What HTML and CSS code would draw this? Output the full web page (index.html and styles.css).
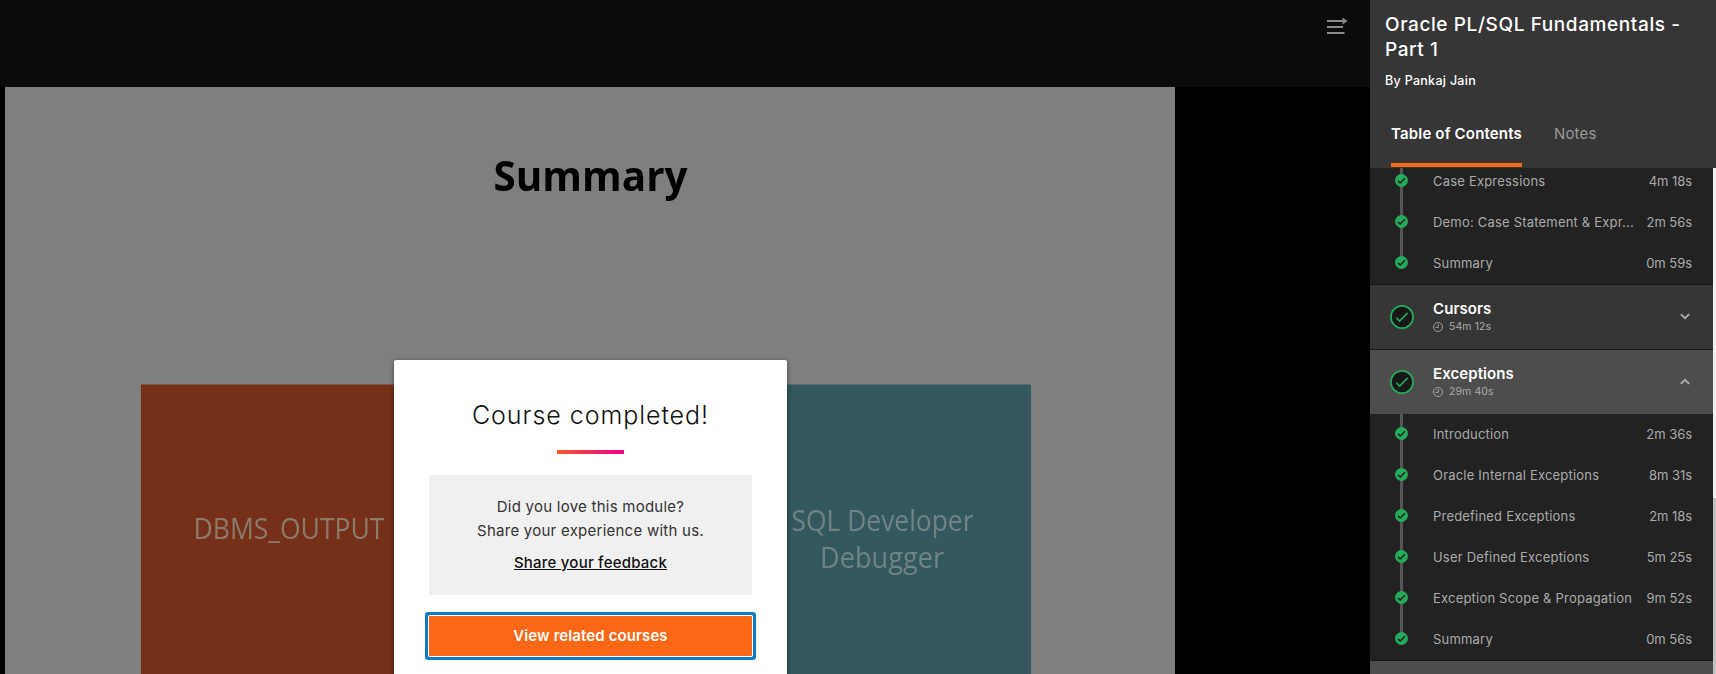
FILE: index.html
```
<!DOCTYPE html>
<html lang="en">
<head>
<meta charset="utf-8">
<title>Oracle PL/SQL Fundamentals - Part 1</title>
<link rel="stylesheet" href="styles.css">
</head>
<body>
<svg class="defs" width="0" height="0" aria-hidden="true">
  <symbol id="done" viewBox="0 0 13 13"><circle cx="6.5" cy="6.5" r="6.5" fill="#25ab5c"/><path d="M3 6.9 5.2 9 10 4.2" fill="none" stroke="#222" stroke-width="1.5"/></symbol>
  <symbol id="module-done" viewBox="0 0 24 24"><circle cx="12" cy="12" r="11.1" fill="#181818" stroke="#25ab5c" stroke-width="1.7"/><path d="M6.3 12.8 9.6 16.1 17.6 7.9" fill="none" stroke="#25ab5c" stroke-width="1.6"/></symbol>
  <symbol id="clock" viewBox="0 0 10 10"><circle cx="5" cy="5" r="4.5" fill="none" stroke="#aaa" stroke-width=".9"/><path d="M5.3 2v3.4H2.4" fill="none" stroke="#aaa" stroke-width=".9"/></symbol>
  <symbol id="chevron" viewBox="0 0 10 7"><path d="M.8 1.1 5 5.2 9.2 1.1" fill="none" stroke="#aaa" stroke-width="2"/></symbol>
</svg>
<div class="player">
  <main class="stage">
    <div class="toolbar">
      <svg class="menu-icon" width="21" height="18" viewBox="0 0 21 18"><path d="M0 4h17M0 10h16M0 16h17.500" stroke="#8a8a8a" stroke-width="2"/><path d="M15.500 .5 20.500 4l-5 3.500z" fill="#8a8a8a"/></svg>
    </div>
    <div class="video">
      <svg class="slide" width="1170" height="587" viewBox="0 0 1170 587">
        <rect width="1170" height="587" fill="#7f7f7f"/>
        <g class="slide-art">
          <rect x="136" y="297.500" width="270" height="310" fill="#762f18"/>
          <rect x="756" y="297.500" width="270" height="310" fill="#33585d"/>
          <text class="slide-title" x="488.500" y="103.500" textLength="194" lengthAdjust="spacingAndGlyphs">Summary</text>
          <text class="slide-label warm" x="188.500" y="451.500" textLength="191" lengthAdjust="spacingAndGlyphs">DBMS_OUTPUT</text>
          <text class="slide-label cool" x="786.500" y="444" textLength="182" lengthAdjust="spacingAndGlyphs">SQL Developer</text>
          <text class="slide-label cool" x="815" y="481" textLength="124" lengthAdjust="spacingAndGlyphs">Debugger</text>
        </g>
      </svg>
    </div>
    <section class="modal" role="dialog">
      <h2 class="modal-title">Course completed!</h2>
      <div class="accent"></div>
      <div class="feedback">
        <p class="ask">Did you love this module?</p>
        <p class="ask">Share your experience with us.</p>
        <a class="feedback-link">Share your feedback</a>
      </div>
      <button class="cta">View related courses</button>
    </section>
  </main>
  <aside class="sidebar">
    <header class="course">
      <h1 class="course-title">Oracle PL/SQL Fundamentals - Part 1</h1>
      <p class="author">By Pankaj Jain</p>
      <nav class="tabs"><a class="tab active">Table of Contents</a><a class="tab">Notes</a></nav>
    </header>
    <div class="scroller">
      <div class="toc">
        <ul class="clips first">
          <li class="clip"><svg class="dot"><use href="#done"/></svg><span class="name">Case Expressions</span><span class="time">4m 18s</span></li>
          <li class="clip"><svg class="dot"><use href="#done"/></svg><span class="name">Demo: Case Statement &amp; Expr...</span><span class="time">2m 56s</span></li>
          <li class="clip"><svg class="dot"><use href="#done"/></svg><span class="name">Summary</span><span class="time">0m 59s</span></li>
        </ul>
        <div class="module">
          <svg class="badge"><use href="#module-done"/></svg>
          <div class="info"><h3 class="module-name">Cursors</h3><p class="length"><svg class="clock"><use href="#clock"/></svg>54m 12s</p></div>
          <svg class="chevron"><use href="#chevron"/></svg>
        </div>
        <div class="module open">
          <svg class="badge"><use href="#module-done"/></svg>
          <div class="info"><h3 class="module-name">Exceptions</h3><p class="length"><svg class="clock"><use href="#clock"/></svg>29m 40s</p></div>
          <svg class="chevron up"><use href="#chevron"/></svg>
        </div>
        <ul class="clips">
          <li class="clip"><svg class="dot"><use href="#done"/></svg><span class="name">Introduction</span><span class="time">2m 36s</span></li>
          <li class="clip"><svg class="dot"><use href="#done"/></svg><span class="name">Oracle Internal Exceptions</span><span class="time">8m 31s</span></li>
          <li class="clip"><svg class="dot"><use href="#done"/></svg><span class="name">Predefined Exceptions</span><span class="time">2m 18s</span></li>
          <li class="clip"><svg class="dot"><use href="#done"/></svg><span class="name">User Defined Exceptions</span><span class="time">5m 25s</span></li>
          <li class="clip"><svg class="dot"><use href="#done"/></svg><span class="name">Exception Scope &amp; Propagation</span><span class="time">9m 52s</span></li>
          <li class="clip"><svg class="dot"><use href="#done"/></svg><span class="name">Summary</span><span class="time">0m 56s</span></li>
        </ul>
        <div class="module open"></div>
      </div>
      <div class="track"><div class="thumb"></div></div>
    </div>
  </aside>
</div>
</body>
</html>
```
FILE: styles.css
```
* { box-sizing: border-box; }
body, h1, h2, h3, p, ul { margin: 0; padding: 0; }
body { background: #000; font-family: Inter, "Open Sans", sans-serif; overflow: hidden; }
.defs { position: absolute; }
svg { display: block; flex: none; }
ul { list-style: none; }

.player { display: flex; height: 674px; overflow: hidden; }
.stage { position: relative; width: 1370px; height: 674px; flex: none; overflow: hidden; background: #000; }
.toolbar { display: flex; justify-content: flex-end; height: 87px; padding: 17px 22px 0 0; background: #0b0b0b; }
.video { padding-left: 5px; }
.slide-art { filter: blur(.6px); }
.slide-title { font: 700 41.5px "Open Sans", sans-serif; fill: #000; }
.slide-label { font: 400 28.5px "Open Sans", sans-serif; }
.warm { fill: #8c7a6b; }
.cool { fill: #6f8387; }

/* Completion dialog over the paused video */
.modal { position: absolute; top: 360px; left: 394px; width: 393px; height: 420px; padding: 36px 35px 0; border-radius: 2px; background: #fff; box-shadow: 0 1px 4px rgba(0, 0, 0, .5); text-align: center; }
.modal-title { color: #111; font-size: 25px; font-weight: 300; line-height: 38px; letter-spacing: .95px; }
.accent { width: 67px; height: 4px; margin: 16px auto 21px; background: linear-gradient(90deg, #f05a28, #ec008c); }
.feedback { height: 120px; padding-top: 20px; background: #f0f0f0; }
.ask { color: #333; font-size: 15px; line-height: 24px; letter-spacing: .25px; }
.feedback-link { display: block; margin-top: 8px; color: #111; font-size: 15px; font-weight: 500; line-height: 24px; letter-spacing: .22px; text-decoration: underline; }
.cta { display: block; width: 100%; height: 40px; margin-top: 21px; padding: 0; border: 0; border-radius: 1px; background: #fa6816; box-shadow: 0 0 0 1px #fff, 0 0 0 4px #127bc1; color: #fff; font: 600 15px/40px Inter, sans-serif; letter-spacing: .1px; }

.sidebar { display: flex; flex-direction: column; width: 346px; height: 674px; flex: none; background: #222; }
.course { height: 168px; flex: none; padding: 12px 16px 0 15px; background: #363636; color: #fff; }
.course-title { font-size: 19px; font-weight: 450; line-height: 25px; letter-spacing: .6px; }
.author { margin-top: 10px; font-size: 12.5px; font-weight: 500; line-height: 17px; letter-spacing: .3px; }
.tabs { display: flex; gap: 32px; margin: 11px 0 0 6px; }
.tab { height: 67px; color: #999; font-size: 15px; line-height: 68px; letter-spacing: .17px; }
.tab.active { border-bottom: 4px solid #fa6816; color: #fff; font-weight: 600; }

.scroller { display: flex; flex: 1; min-height: 0; overflow: hidden; }
.toc { width: 343px; flex: none; }
.clips { position: relative; height: 246px; }
.clips::before { content: ""; position: absolute; top: 0; bottom: 21px; left: 30px; width: 3px; background: #555; }
.clips.first { height: 116px; }
.clips.first .clip:first-child { height: 34px; padding-top: 0; padding-bottom: 9px; }
.clip { position: relative; display: flex; align-items: center; height: 41px; padding: 0 21px 2px 25px; color: #aaa; font-size: 13px; }
.dot { width: 13px; height: 13px; margin-right: 25px; }
.name { width: 202px; flex: none; white-space: nowrap; letter-spacing: .2px; }
.time { flex: 1; text-align: right; white-space: nowrap; letter-spacing: -.05px; }

.module { display: flex; align-items: center; height: 65px; padding: 0 23px 1px 20px; border-top: 1px solid #181818; background: #363636; color: #aaa; }
.module.open { background: #4d4d4d; }
.badge { width: 24px; height: 24px; margin-right: 19px; }
.info { flex: 1; }
.module-name { color: #fff; font-size: 15px; font-weight: 600; line-height: 20px; letter-spacing: .08px; }
.length { display: flex; align-items: center; gap: 6px; font-size: 10.5px; line-height: 15px; letter-spacing: .1px; }
.clock { width: 10px; height: 10px; }
.chevron { width: 10px; height: 7px; }
.chevron.up { transform: scaleY(-1); }
.track { width: 3px; background: #f0f0f0; padding-top: 330px; }
.thumb { height: 176px; background: #c1c1c1; }
```
